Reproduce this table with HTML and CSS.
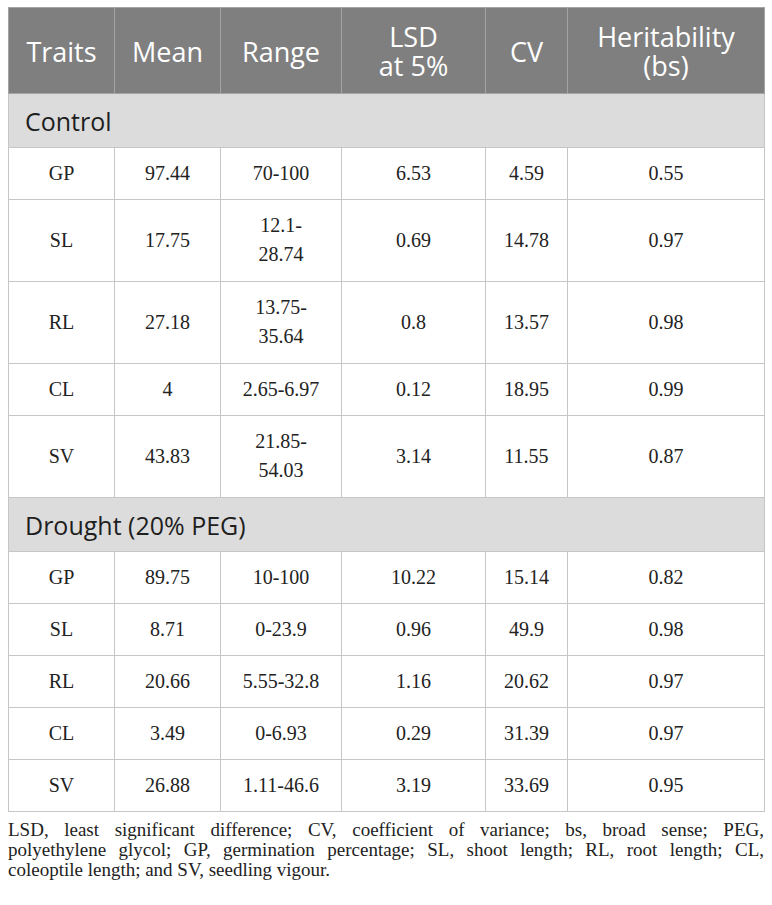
FILE: index.html
```html
<!DOCTYPE html>
<html lang="en">
<head>
    <meta charset="UTF-8">
    <meta name="viewport" content="width=device-width, initial-scale=1.0">
    <title>Traits table</title>
    <link rel="stylesheet" href="styles.css">
</head>
<body>
    <div class="page">
        <table class="traits">
            <colgroup>
                <col class="c-trait">
                <col class="c-mean">
                <col class="c-range">
                <col class="c-lsd">
                <col class="c-cv">
                <col class="c-her">
            </colgroup>
            <thead>
                <tr>
                    <th>Traits</th>
                    <th>Mean</th>
                    <th>Range</th>
                    <th>LSD<br>at 5%</th>
                    <th>CV</th>
                    <th>Heritability<br>(bs)</th>
                </tr>
            </thead>
            <tbody>
                <tr class="section"><td colspan="6">Control</td></tr>
                <tr><td>GP</td><td>97.44</td><td>70-100</td><td>6.53</td><td>4.59</td><td>0.55</td></tr>
                <tr class="tall"><td>SL</td><td>17.75</td><td>12.1-<br>28.74</td><td>0.69</td><td>14.78</td><td>0.97</td></tr>
                <tr class="tall"><td>RL</td><td>27.18</td><td>13.75-<br>35.64</td><td>0.8</td><td>13.57</td><td>0.98</td></tr>
                <tr><td>CL</td><td>4</td><td>2.65-6.97</td><td>0.12</td><td>18.95</td><td>0.99</td></tr>
                <tr class="tall"><td>SV</td><td>43.83</td><td>21.85-<br>54.03</td><td>3.14</td><td>11.55</td><td>0.87</td></tr>
                <tr class="section"><td colspan="6">Drought (20% PEG)</td></tr>
                <tr><td>GP</td><td>89.75</td><td>10-100</td><td>10.22</td><td>15.14</td><td>0.82</td></tr>
                <tr><td>SL</td><td>8.71</td><td>0-23.9</td><td>0.96</td><td>49.9</td><td>0.98</td></tr>
                <tr><td>RL</td><td>20.66</td><td>5.55-32.8</td><td>1.16</td><td>20.62</td><td>0.97</td></tr>
                <tr><td>CL</td><td>3.49</td><td>0-6.93</td><td>0.29</td><td>31.39</td><td>0.97</td></tr>
                <tr><td>SV</td><td>26.88</td><td>1.11-46.6</td><td>3.19</td><td>33.69</td><td>0.95</td></tr>
            </tbody>
        </table>
        <p class="note">
            <span class="line">LSD, least significant difference; CV, coefficient of variance; bs, broad sense; PEG,</span>
            <span class="line">polyethylene glycol; GP, germination percentage; SL, shoot length; RL, root length; CL,</span>
            <span class="line last">coleoptile length; and SV, seedling vigour.</span>
        </p>
    </div>
</body>
</html>
```

FILE: styles.css
```css
body {
    margin: 0;
    padding: 0;
    background-color: #ffffff;
    color: #222;
}

.page {
    padding: 7px 8px 0 8px;
}

.traits {
    width: 756px;
    border-collapse: collapse;
    table-layout: fixed;
    font-family: 'Liberation Serif', serif;
    font-size: 20px;
}

.c-trait { width: 106px; }
.c-mean { width: 106px; }
.c-range { width: 121px; }
.c-lsd { width: 144px; }
.c-cv { width: 82px; }
.c-her { width: 197px; }

.traits th, .traits td {
    border: 1px solid #c6c6c6;
    text-align: center;
    line-height: 29px;
    padding: 11px 6px 11px 6px;
}

.traits tr.tall td {
    padding-bottom: 12px;
}

.traits th {
    background-color: #7f7f7f;
    color: #ffffff;
    font-family: 'Open Sans', sans-serif;
    font-weight: normal;
    font-size: 27px;
    line-height: 29px;
    padding: 14px 4px 13px 4px;
    border-color: #a4a4a4;
}

.traits tr.section td {
    background-color: #dcdcdc;
    font-family: 'Open Sans', sans-serif;
    font-size: 25px;
    text-align: left;
    padding: 13px 16px 11px 16px;
    color: #1e1e1e;
}

.note {
    margin: 8px 0 0 0;
    width: 756px;
    font-family: 'Liberation Serif', serif;
    font-size: 19px;
    line-height: 20px;
    color: #222;
}

.note .line {
    display: block;
    text-align: justify;
    text-align-last: justify;
}

.note .line.last {
    text-align-last: left;
}
```
